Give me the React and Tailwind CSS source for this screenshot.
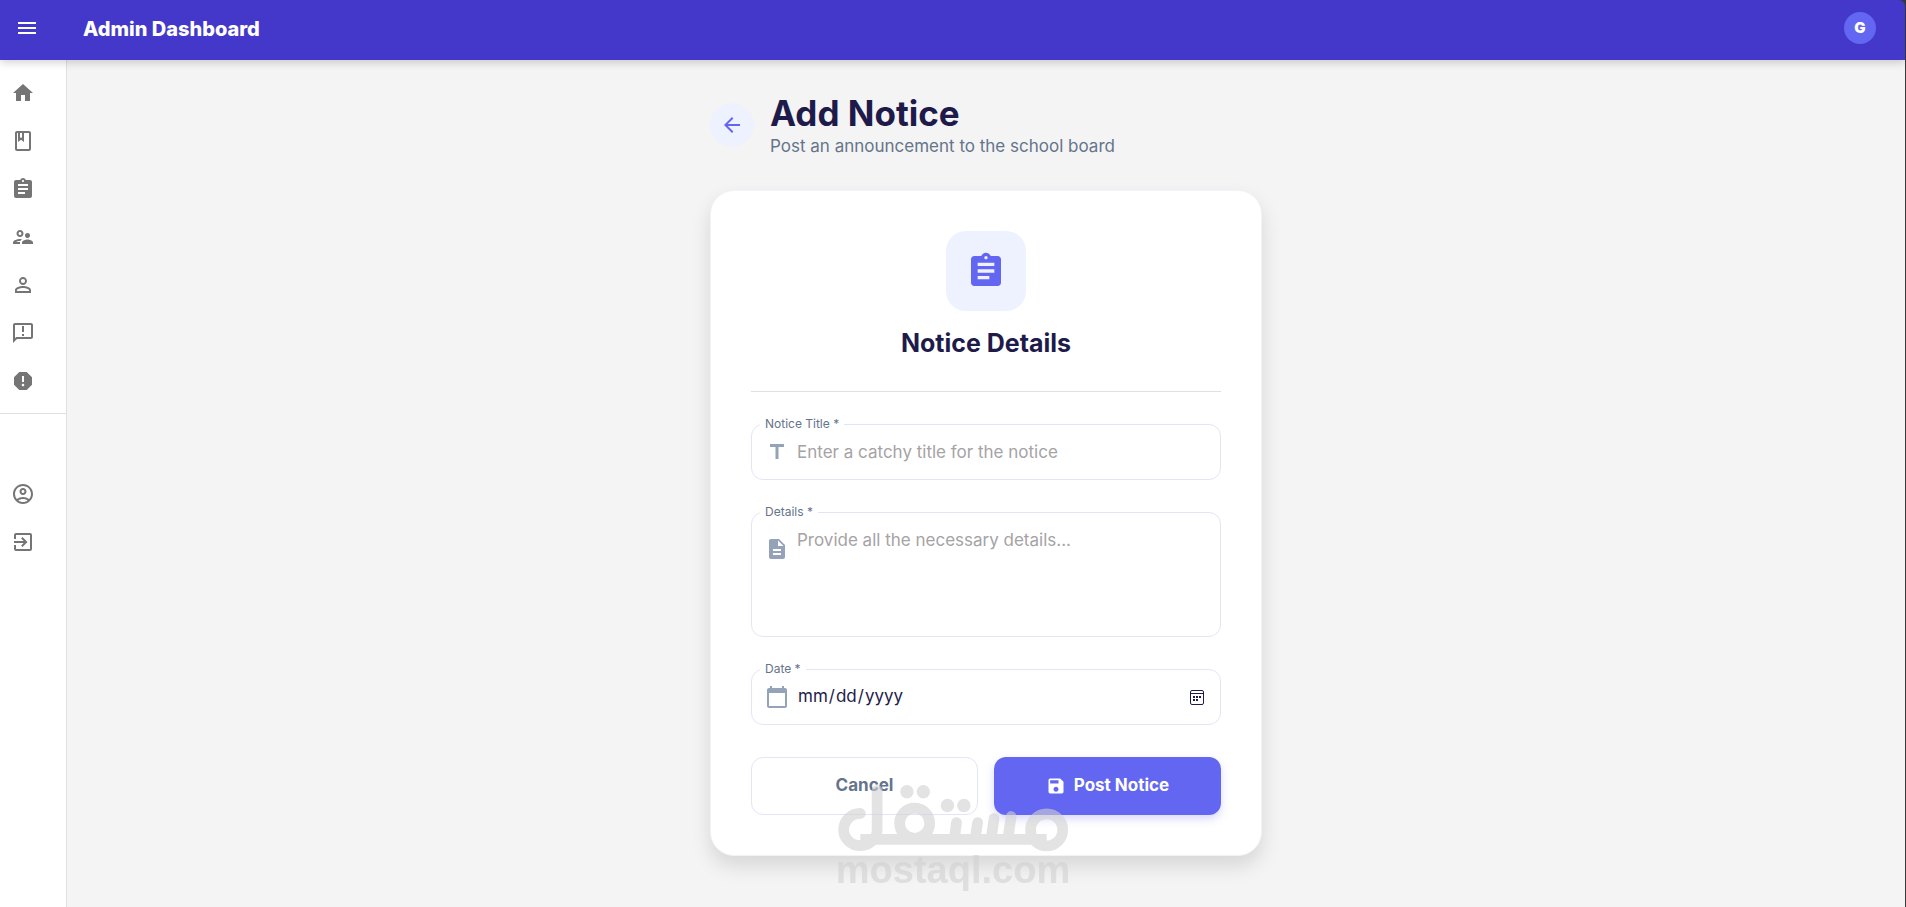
import React from "react";
import {
  MdArrowBack,
  MdAssignment,
  MdCalendarToday,
  MdDescription,
  MdExitToApp,
  MdHome,
  MdMenu,
  MdOutlineAccountCircle,
  MdOutlineAnnouncement,
  MdOutlineClass,
  MdOutlineSupervisorAccount,
  MdPersonOutline,
  MdReport,
  MdSave,
  MdTitle,
} from "react-icons/md";

const mainLinks = [
  { label: "Home", icon: MdHome },
  { label: "Classes", icon: MdOutlineClass },
  { label: "Subjects", icon: MdAssignment },
  { label: "Teachers", icon: MdOutlineSupervisorAccount },
  { label: "Students", icon: MdPersonOutline },
  { label: "Notices", icon: MdOutlineAnnouncement },
  { label: "Complains", icon: MdReport },
];

const userLinks = [
  { label: "Profile", icon: MdOutlineAccountCircle },
  { label: "Logout", icon: MdExitToApp },
];

function NavList({ links }) {
  return (
    <ul>
      {links.map(({ label, icon: Icon }) => (
        <li key={label}>
          <a href="#" aria-label={label} className="flex h-12 items-center pl-[11px] text-[#757575]">
            <Icon size={24} />
          </a>
        </li>
      ))}
    </ul>
  );
}

function Field({ id, label, icon, top, children }) {
  return (
    <div
      className={`relative flex rounded-xl border border-[#e2e5f5] px-[13px] ${top ? "items-start" : "items-center"}`}
    >
      <label htmlFor={id} className="absolute -top-[9px] left-2 bg-white px-[5px] text-[12px] leading-4 text-[#64748b]">
        {label} *
      </label>
      <span className="shrink-0 text-[#94a3b8]">{icon}</span>
      {children}
    </div>
  );
}

// drawn over the browser's own picker button, which stays clickable
function PickerIcon() {
  return (
    <svg
      className="pointer-events-none absolute right-4 text-[#1e1b4b]"
      width="14"
      height="15"
      viewBox="0 0 14 15"
      fill="none"
      stroke="currentColor"
    >
      <rect x="0.5" y="0.5" width="13" height="14" rx="1.5" />
      <path d="M1 3.5h12" />
      <g fill="currentColor" stroke="none">
        <path d="M3 6h2v2H3zM6 6h2v2H6zM9 6h2v2H9zM3 9h2v2H3zM6 9h2v2H6z" />
      </g>
    </svg>
  );
}

function Watermark() {
  return (
    <div className="pointer-events-none fixed inset-x-0 bottom-[19px] flex flex-col items-center opacity-60">
      <svg width="231" height="67" viewBox="54 44 688 200" fill="none" stroke="#d0d0d0" strokeWidth="32" strokeLinecap="round">
        <path d="M170 60V178A50 48 0 1 1 120 129" />
        <path d="M120 206H676" strokeLinecap="butt" />
        <circle cx="282" cy="158" r="45" />
        <circle cx="676" cy="178" r="48" />
        <path d="M407 156l-6 44M470 156l-7 44M519 144l-8 56M570 138l-9 62" />
        <g fill="#d0d0d0" stroke="none">
          <circle cx="259" cy="64" r="20" />
          <circle cx="308" cy="64" r="20" />
          <circle cx="380" cy="105" r="20" />
          <circle cx="429" cy="105" r="20" />
        </g>
      </svg>
      <span className="font-['Liberation_Sans',sans-serif] text-[38px] leading-9 font-bold text-[#d0d0d0]">mostaql.com</span>
    </div>
  );
}

function App() {
  return (
    <div className="flex min-h-screen flex-col bg-[#3a3a3a] pr-px font-['Inter',sans-serif]">
      <header className="relative z-10 flex h-[60px] items-center rounded-tr-md bg-[#4338ca] pr-[29px] pb-1 pl-[15px] text-white shadow-[0_2px_10px_rgba(0,0,0,0.2)]">
        <button type="button" aria-label="Open menu">
          <MdMenu size={24} />
        </button>
        <h1 className="ml-11 flex-1 pt-0.5 text-[20px] font-extrabold">Admin Dashboard</h1>
        <button type="button" aria-label="Account" className="size-8 rounded-full bg-[#6366f1] text-[15px] font-black">
          G
        </button>
      </header>

      <div className="flex flex-1 bg-[#f4f4f4]">
        <nav className="w-[67px] shrink-0 border-r border-[#e0e0e0] bg-white pt-[9px]">
          <NavList links={mainLinks} />
          <hr className="mt-2 mb-14 border-[#e0e0e0]" />
          <NavList links={userLinks} />
        </nav>

        <main className="flex-1 px-6 pt-8">
          <div className="mx-auto max-w-[552px]">
            <div className="flex items-center gap-4">
              <button
                type="button"
                aria-label="Go back"
                className="flex size-11 items-center justify-center rounded-full bg-[#eef2ff] text-[#6366f1]"
              >
                <MdArrowBack size={24} />
              </button>
              <div>
                <h2 className="text-[35px] leading-[42px] font-bold text-[#1e1b4b]">Add Notice</h2>
                <p className="text-[17px] leading-6 text-[#64748b]">Post an announcement to the school board</p>
              </div>
            </div>

            <form className="mt-8 rounded-3xl border border-[#f1f3fb] bg-white p-10 shadow-[0_10px_20px_rgba(0,0,0,0.12)]">
              <div className="mx-auto flex size-20 items-center justify-center rounded-[20px] bg-[#eef2ff] text-[#6366f1]">
                <MdAssignment size={40} />
              </div>
              <h3 className="mt-4 text-center text-[25px] leading-8 font-bold text-[#1e1b4b]">Notice Details</h3>
              <hr className="mt-8 mb-8 border-[#e0e0e0]" />

              <div className="flex flex-col gap-8">
                <Field id="title" label="Notice Title" icon={<MdTitle size={24} />}>
                  <input
                    id="title"
                    type="text"
                    placeholder="Enter a catchy title for the notice"
                    className="ml-2 h-[54px] min-w-0 flex-1 text-[17px] text-[#1e1b4b] outline-none placeholder:text-[#a5a3a5]"
                  />
                </Field>
                <Field id="details" label="Details" top icon={<MdDescription size={24} className="mt-6" />}>
                  <textarea
                    id="details"
                    rows={4}
                    placeholder="Provide all the necessary details..."
                    className="ml-2 block h-[123px] min-w-0 flex-1 resize-none py-[15px] text-[17px] leading-6 text-[#1e1b4b] outline-none placeholder:text-[#a5a3a5]"
                  />
                </Field>
                <Field id="date" label="Date" icon={<MdCalendarToday size={24} />}>
                  <input
                    id="date"
                    type="date"
                    className="ml-2 h-[54px] min-w-0 flex-1 text-[17px] text-[#1e1b4b] outline-none [&::-webkit-calendar-picker-indicator]:opacity-0"
                  />
                  <PickerIcon />
                </Field>
              </div>

              <div className="mt-8 grid grid-cols-2 gap-4">
                <button type="button" className="h-[58px] rounded-xl border border-[#e2e5f5] text-[17px] font-bold text-[#64748b]">
                  Cancel
                </button>
                <button
                  type="submit"
                  className="flex h-[58px] items-center justify-center gap-2 rounded-xl bg-[#6366f1] text-[17px] font-bold text-white shadow-[0_4px_8px_rgba(99,102,241,0.25)]"
                >
                  <MdSave size={20} />
                  Post Notice
                </button>
              </div>
            </form>
          </div>
        </main>
      </div>
      <Watermark />
    </div>
  );
}

export default App;
